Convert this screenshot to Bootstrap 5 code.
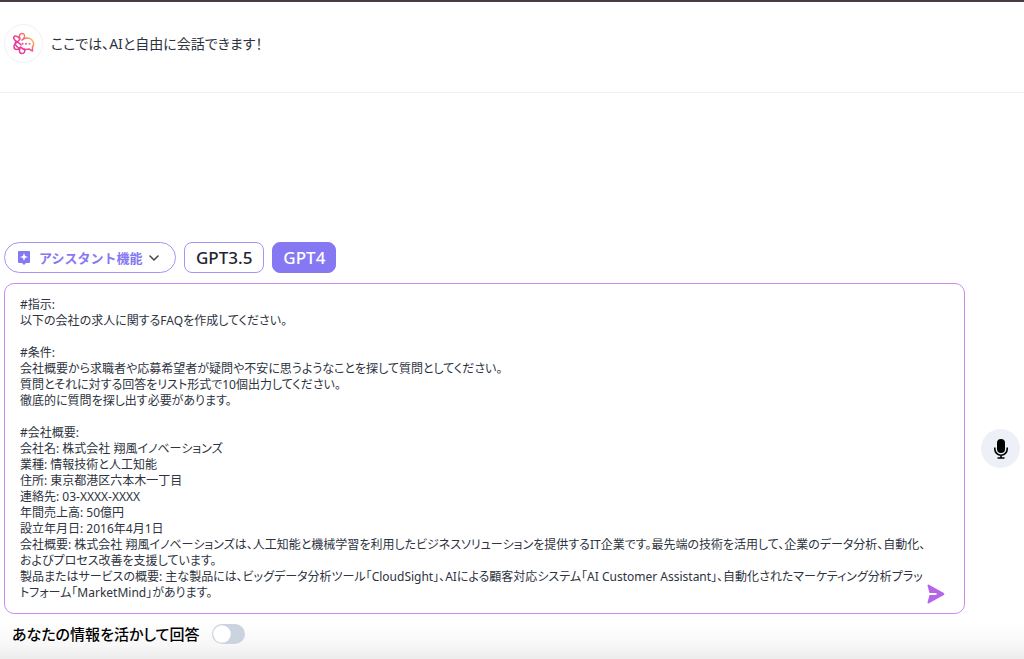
<!DOCTYPE html>
<html lang="ja">
<head>
<meta charset="utf-8">
<meta name="viewport" content="width=device-width, initial-scale=1">
<title>AIチャット</title>
<link href="https://cdn.jsdelivr.net/npm/bootstrap@5.3.0/dist/css/bootstrap.min.css" rel="stylesheet">
<style>
  body { font-family: "Noto Sans", "Noto Sans CJK JP", sans-serif; font-feature-settings: "palt"; color: #2d3340; background: #fff; }
  .page { border-top: 2px solid #4b3a45; background: linear-gradient(to top, #ececec 0, #f7f7f7 14px, #fff 36px); }
  .intro { height: 91px; padding: 21px 4px 28px; border-bottom: 1px solid #edf0f4; font-size: 14px; }
  .avatar { width: 39px; height: 39px; border: 1px solid #edf2f7; }
  .composer { padding: 0 4px 13px; }
  .models { margin-bottom: 10px; }
  .pill { height: 31px; padding: 0 11px; border: 1px solid #a195f5; background: #fff; border-radius: 8px; font-size: 17px; line-height: 24px; font-weight: 500; color: #1f2533; white-space: nowrap; }
  .pill-menu { width: 172px; border-radius: 16px; padding: 0 14px 0 12px; color: #8678f2; font-size: 13px; font-weight: 700; }
  .pill-on { padding: 0 10px; background: #8678f2; border-color: #8678f2; color: #fff; }
  .prompt { border: 1px solid #c98cec; border-radius: 10px; padding: 13px 34px 12px 15px; height: 331px; font-size: 12px; line-height: 16px; color: #2d3340; resize: none; overflow: hidden; font-feature-settings: "palt"; }
  .prompt:focus { border-color: #b565e8; box-shadow: none; }
  .send { right: 16px; bottom: 7px; width: 26px; height: 26px; }
  .mic { width: 39px; height: 39px; background: #edf1f7; }
  .personal { gap: 13px; font-size: 15px; line-height: 24px; font-weight: 500; color: #000; padding: 0 8px; }
  .personal .form-check-input { width: 33px; height: 20px; border: 0; background-color: #cbd3df; --bs-form-switch-bg: url("data:image/svg+xml,%3csvg xmlns='http://www.w3.org/2000/svg' viewBox='-4 -4 8 8'%3e%3ccircle r='3.5' fill='%23fff'/%3e%3c/svg%3e"); }
  .personal .form-check-input:checked { background-color: #8678f2; }
</style>
</head>
<body>
<div class="page d-flex flex-column min-vh-100">
  <header class="intro d-flex align-items-center">
    <span class="avatar rounded-circle d-flex align-items-center justify-content-center flex-shrink-0 me-2">
      <svg width="23" height="23" viewBox="0 0 23 23" fill="none" stroke="url(#warm)" stroke-width="1.5" stroke-linecap="round" stroke-linejoin="round" aria-hidden="true">
        <defs><linearGradient id="warm" gradientUnits="userSpaceOnUse" x1="10" y1="15" x2="20" y2="7"><stop offset="0" stop-color="#e93b9a"/><stop offset=".5" stop-color="#f2607c"/><stop offset="1" stop-color="#f8b944"/></linearGradient></defs>
        <path d="M8 7C6.500 3 8 1.500 10 1.500S13.500 3 12 6M8 7C4.500 2.500 1 3.800 1.800 6.500C2.500 9.500 8 10.500 9 13M8 7C7 10 2 10.500 2 14.500C1.800 18 6 18.500 8.500 15.500M4.500 9.500C1.500 11 3.500 14 8 17M8 17C6.500 20 8 21.500 10 21.500S13.500 20 12.500 17.300"/>
        <path d="M10 8C12.500 5.500 17 5.500 19.500 7.500C22 10 22 13 20.500 15V19L17 17C13 18 10 17 8.500 15"/>
        <path d="M10.500 11.800h.1M14 11.800h.1M17.500 11.800h.1" stroke-width="2"/>
      </svg>
    </span>
    <span>ここでは、AIと自由に会話できます！</span>
  </header>

  <main class="composer mt-auto">
    <div class="models d-flex gap-2">
      <button type="button" class="pill pill-menu d-flex align-items-center" aria-haspopup="true">
        <svg class="me-2" width="14" height="15" viewBox="0 0 14 15" aria-hidden="true"><path fill="#8678f2" d="M2 1h10a1 1 0 0 1 1 1v10a1 1 0 0 1-1 1H9l-2 2-2-2H2a1 1 0 0 1-1-1V2a1 1 0 0 1 1-1z"/><path fill="#fff" d="M7 3l1.100 2.900L11 7 8.100 8.100 7 11 5.900 8.100 3 7l2.900-1.100z"/></svg>
        <span>アシスタント機能</span>
        <svg class="ms-auto" width="14" height="14" viewBox="0 0 14 14" fill="none" stroke="#4a4a55" stroke-width="1.600" stroke-linecap="round" stroke-linejoin="round" aria-hidden="true"><path d="M3 5l4 4 4-4"/></svg>
      </button>
      <button type="button" class="pill">GPT3.5</button>
      <button type="button" class="pill pill-on" aria-pressed="true">GPT4</button>
    </div>

    <div class="d-flex align-items-center gap-3 mb-2">
      <div class="position-relative flex-grow-1">
        <textarea class="prompt form-control d-block" aria-label="メッセージ">#指示:
以下の会社の求人に関するFAQを作成してください。

#条件:
会社概要から求職者や応募希望者が疑問や不安に思うようなことを探して質問としてください。
質問とそれに対する回答をリスト形式で10個出力してください。
徹底的に質問を探し出す必要があります。

#会社概要:
会社名: 株式会社 翔風イノベーションズ
業種: 情報技術と人工知能
住所: 東京都港区六本木一丁目
連絡先: 03-XXXX-XXXX
年間売上高: 50億円
設立年月日: 2016年4月1日
会社概要: 株式会社 翔風イノベーションズは、人工知能と機械学習を利用したビジネスソリューションを提供するIT企業です。最先端の技術を活用して、企業のデータ分析、自動化、およびプロセス改善を支援しています。
製品またはサービスの概要: 主な製品には、ビッグデータ分析ツール「CloudSight」、AIによる顧客対応システム「AI Customer Assistant」、自動化されたマーケティング分析プラットフォーム「MarketMind」があります。</textarea>
        <button type="button" class="send btn p-0 border-0 position-absolute d-flex align-items-center justify-content-center" aria-label="送信">
          <svg width="20" height="20" viewBox="0 0 20 20" aria-hidden="true"><path fill="#b565e8" d="M1.500 1.600Q1.600.2 3 .7L17.800 8.900Q19.200 10 17.800 11.100L3 19.300Q1.600 19.800 1.500 18.400L3.500 11H10.500V9H3.500z"/></svg>
        </button>
      </div>
      <button type="button" class="mic btn p-0 border-0 rounded-circle d-flex align-items-center justify-content-center flex-shrink-0" aria-label="音声入力">
        <svg width="16" height="22" viewBox="0 0 16 22" aria-hidden="true"><rect x="4" y="1" width="8" height="14" rx="4"/><path d="M1.800 9.500V11a6.200 6.200 0 0 0 12.400 0V9.500M8 17v3M4.500 20h7" fill="none" stroke="#000" stroke-width="1.600"/></svg>
      </button>
    </div>

    <div class="personal d-flex align-items-center">
      <label for="personal">あなたの情報を活かして回答</label>
      <div class="form-switch p-0 m-0 d-flex"><input class="form-check-input m-0" type="checkbox" role="switch" id="personal"></div>
    </div>
  </main>
</div>
<script src="https://cdn.jsdelivr.net/npm/bootstrap@5.3.0/dist/js/bootstrap.bundle.min.js"></script>
</body>
</html>
